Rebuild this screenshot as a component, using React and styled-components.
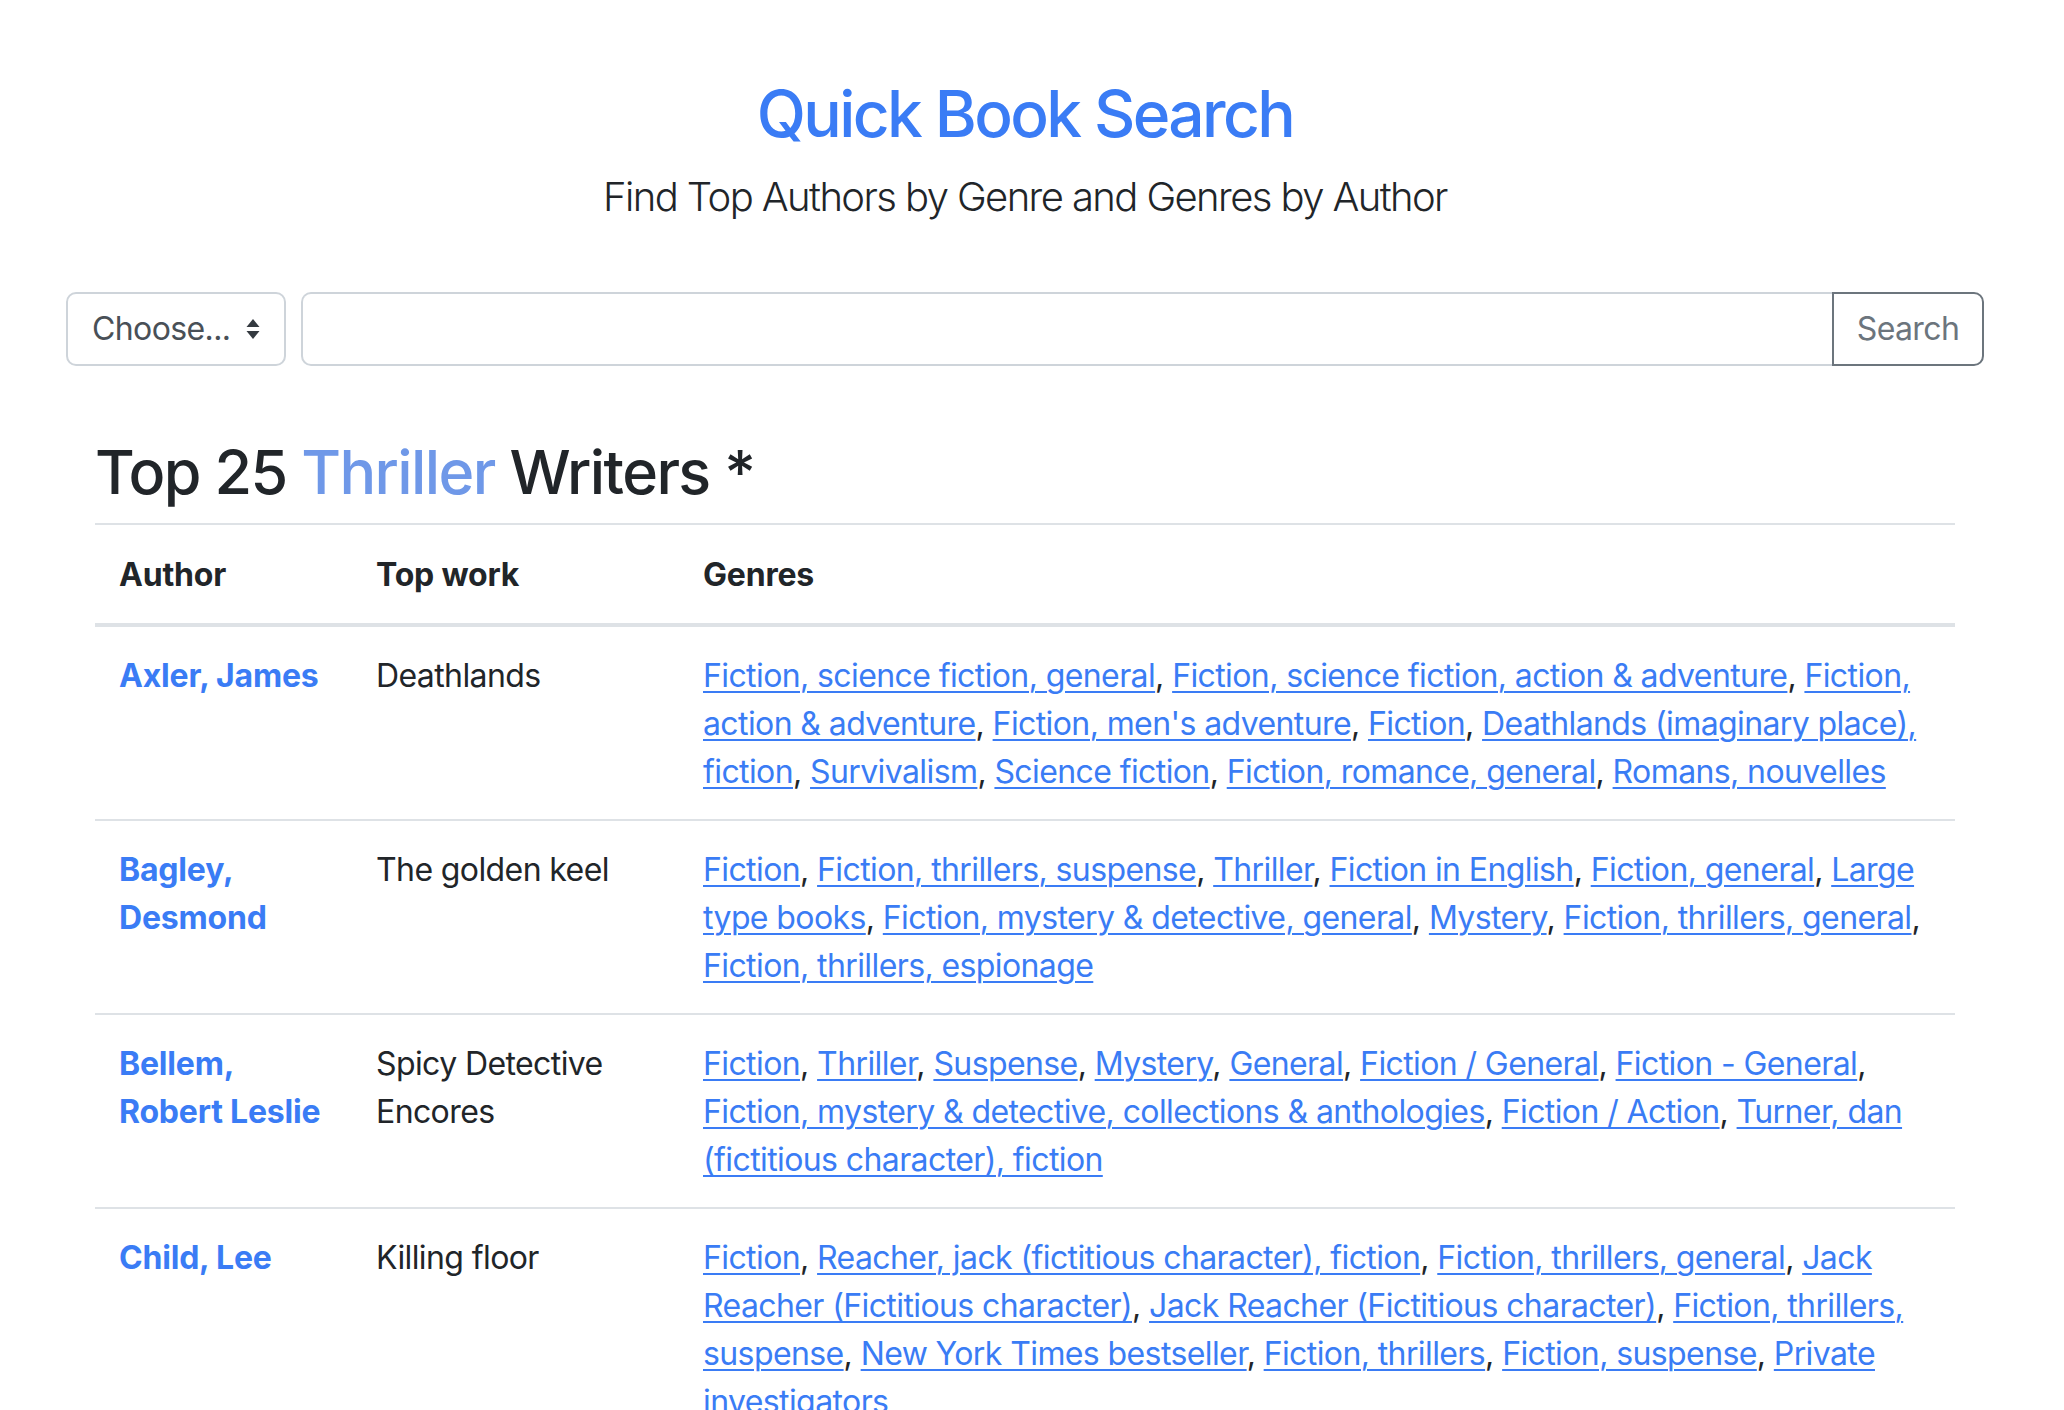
import React from 'react';
import styled, { createGlobalStyle } from 'styled-components';

const GlobalStyle = createGlobalStyle`
  html, body {
    margin: 0;
    padding: 0;
    background: #fff;
  }
  body {
    font-family: Inter, "Noto Sans", "Liberation Sans", sans-serif;
    color: #212529;
    font-size: 32px;
    line-height: 1.5;
    letter-spacing: -0.6px;
  }
`;

const Page = styled.div`
  width: 2050px;
  padding-top: 76px;
  padding-bottom: 80px;
`;

const Header = styled.header`
  text-align: center;
`;

const Title = styled.h1`
  margin: 0;
  font-size: 64px;
  line-height: 1.2;
  font-weight: 500;
  letter-spacing: -2.6px;
  color: #3a7cf5;
`;

const Lead = styled.p`
  margin: 14px 0 0;
  font-size: 40px;
  font-weight: 300;
  line-height: 1.5;
  letter-spacing: -1.6px;
`;

const SearchForm = styled.form`
  display: flex;
  align-items: stretch;
  gap: 15px;
  margin: 65px 66px 0;
  height: 74px;
`;

const SelectBox = styled.div`
  position: relative;
  display: flex;
  align-items: center;
  width: 220px;
  box-sizing: border-box;
  padding: 0 24px;
  border: 2px solid #ced4da;
  border-radius: 10px;
  color: #495057;
  font-size: 32px;
`;

const Arrow = styled.svg`
  position: absolute;
  right: 24px;
  top: 50%;
  transform: translateY(-50%);
`;

const InputGroup = styled.div`
  flex: 1;
  display: flex;
`;

const TextInput = styled.input`
  flex: 1;
  min-width: 0;
  box-sizing: border-box;
  border: 2px solid #ced4da;
  border-right: none;
  border-radius: 10px 0 0 10px;
  font: inherit;
  padding: 0 24px;
  outline: none;
`;

const SearchButton = styled.button`
  width: 152px;
  box-sizing: border-box;
  background: #fff;
  border: 2px solid #6c757d;
  border-radius: 0 10px 10px 0;
  color: #6c757d;
  font-family: inherit;
  font-size: 32px;
  letter-spacing: -0.6px;
  cursor: pointer;
`;

const Results = styled.section`
  margin: 70px 95px 0;
`;

const Heading = styled.h2`
  margin: 0 0 14px;
  font-size: 61px;
  line-height: 1.2;
  font-weight: 500;
  letter-spacing: -1.6px;
`;

const Genre = styled.span`
  color: #6f98e8;
`;

const Table = styled.table`
  width: 100%;
  border-collapse: collapse;
  table-layout: fixed;
`;

const Th = styled.th`
  text-align: left;
  font-weight: 700;
  letter-spacing: -0.2px;
  padding: 26px 24px 24px;
  border-top: 2px solid #dee2e6;
  border-bottom: 4px solid #dee2e6;
  vertical-align: bottom;
`;

const Td = styled.td`
  padding: 25px 24px 23px;
  border-top: 2px solid #dee2e6;
  vertical-align: top;
`;

const AuthorLink = styled.a`
  color: #3a7cf5;
  font-weight: 700;
  letter-spacing: -0.2px;
  text-decoration: none;
`;

const GenreLink = styled.a`
  color: #3a7cf5;
  text-decoration: underline;
  text-decoration-thickness: 2px;
  text-underline-offset: 4px;
`;

const rows = [
  {
    author: 'Axler, James',
    work: 'Deathlands',
    genres: [
      'Fiction, science fiction, general',
      'Fiction, science fiction, action & adventure',
      'Fiction, action & adventure',
      "Fiction, men's adventure",
      'Fiction',
      'Deathlands (imaginary place), fiction',
      'Survivalism',
      'Science fiction',
      'Fiction, romance, general',
      'Romans, nouvelles',
    ],
  },
  {
    author: 'Bagley, Desmond',
    work: 'The golden keel',
    genres: [
      'Fiction',
      'Fiction, thrillers, suspense',
      'Thriller',
      'Fiction in English',
      'Fiction, general',
      'Large type books',
      'Fiction, mystery & detective, general',
      'Mystery',
      'Fiction, thrillers, general',
      'Fiction, thrillers, espionage',
    ],
  },
  {
    author: 'Bellem, Robert Leslie',
    work: 'Spicy Detective Encores',
    genres: [
      'Fiction',
      'Thriller',
      'Suspense',
      'Mystery',
      'General',
      'Fiction / General',
      'Fiction - General',
      'Fiction, mystery & detective, collections & anthologies',
      'Fiction / Action',
      'Turner, dan (fictitious character), fiction',
    ],
  },
  {
    author: 'Child, Lee',
    work: 'Killing floor',
    genres: [
      'Fiction',
      'Reacher, jack (fictitious character), fiction',
      'Fiction, thrillers, general',
      'Jack Reacher (Fictitious character)',
      'Jack Reacher (Fictitious character)',
      'Fiction, thrillers, suspense',
      'New York Times bestseller',
      'Fiction, thrillers',
      'Fiction, suspense',
      'Private investigators',
    ],
  },
  {
    author: 'Clancy, Tom',
    work: 'The Hunt for Red October',
    genres: ['Fiction', 'Fiction, thrillers, general', 'Submarines (Ships)', 'Large type books'],
  },
];

const App = () => (
  <Page>
    <GlobalStyle />
    <Header>
      <Title>Quick Book Search</Title>
      <Lead>Find Top Authors by Genre and Genres by Author</Lead>
    </Header>

    <SearchForm onSubmit={(e) => e.preventDefault()}>
      <SelectBox>
        Choose...
        <Arrow width="14" height="22" viewBox="0 0 14 22">
          <path d="M7 1 L13.5 9 H0.5 Z" fill="#343a40" />
          <path d="M7 21 L13.5 13 H0.5 Z" fill="#343a40" />
        </Arrow>
      </SelectBox>
      <InputGroup>
        <TextInput type="text" />
        <SearchButton type="submit">Search</SearchButton>
      </InputGroup>
    </SearchForm>

    <Results>
      <Heading>
        Top 25 <Genre>Thriller</Genre> Writers *
      </Heading>
      <Table>
        <colgroup>
          <col style={{ width: 257 }} />
          <col style={{ width: 327 }} />
          <col />
        </colgroup>
        <thead>
          <tr>
            <Th>Author</Th>
            <Th>Top work</Th>
            <Th>Genres</Th>
          </tr>
        </thead>
        <tbody>
          {rows.map((row) => (
            <tr key={row.author}>
              <Td>
                <AuthorLink href="#">{row.author}</AuthorLink>
              </Td>
              <Td>{row.work}</Td>
              <Td>
                {row.genres.map((g, i) => (
                  <React.Fragment key={i}>
                    <GenreLink href="#">{g}</GenreLink>
                    {i < row.genres.length - 1 ? ', ' : ''}
                  </React.Fragment>
                ))}
              </Td>
            </tr>
          ))}
        </tbody>
      </Table>
    </Results>
  </Page>
);

export default App;
